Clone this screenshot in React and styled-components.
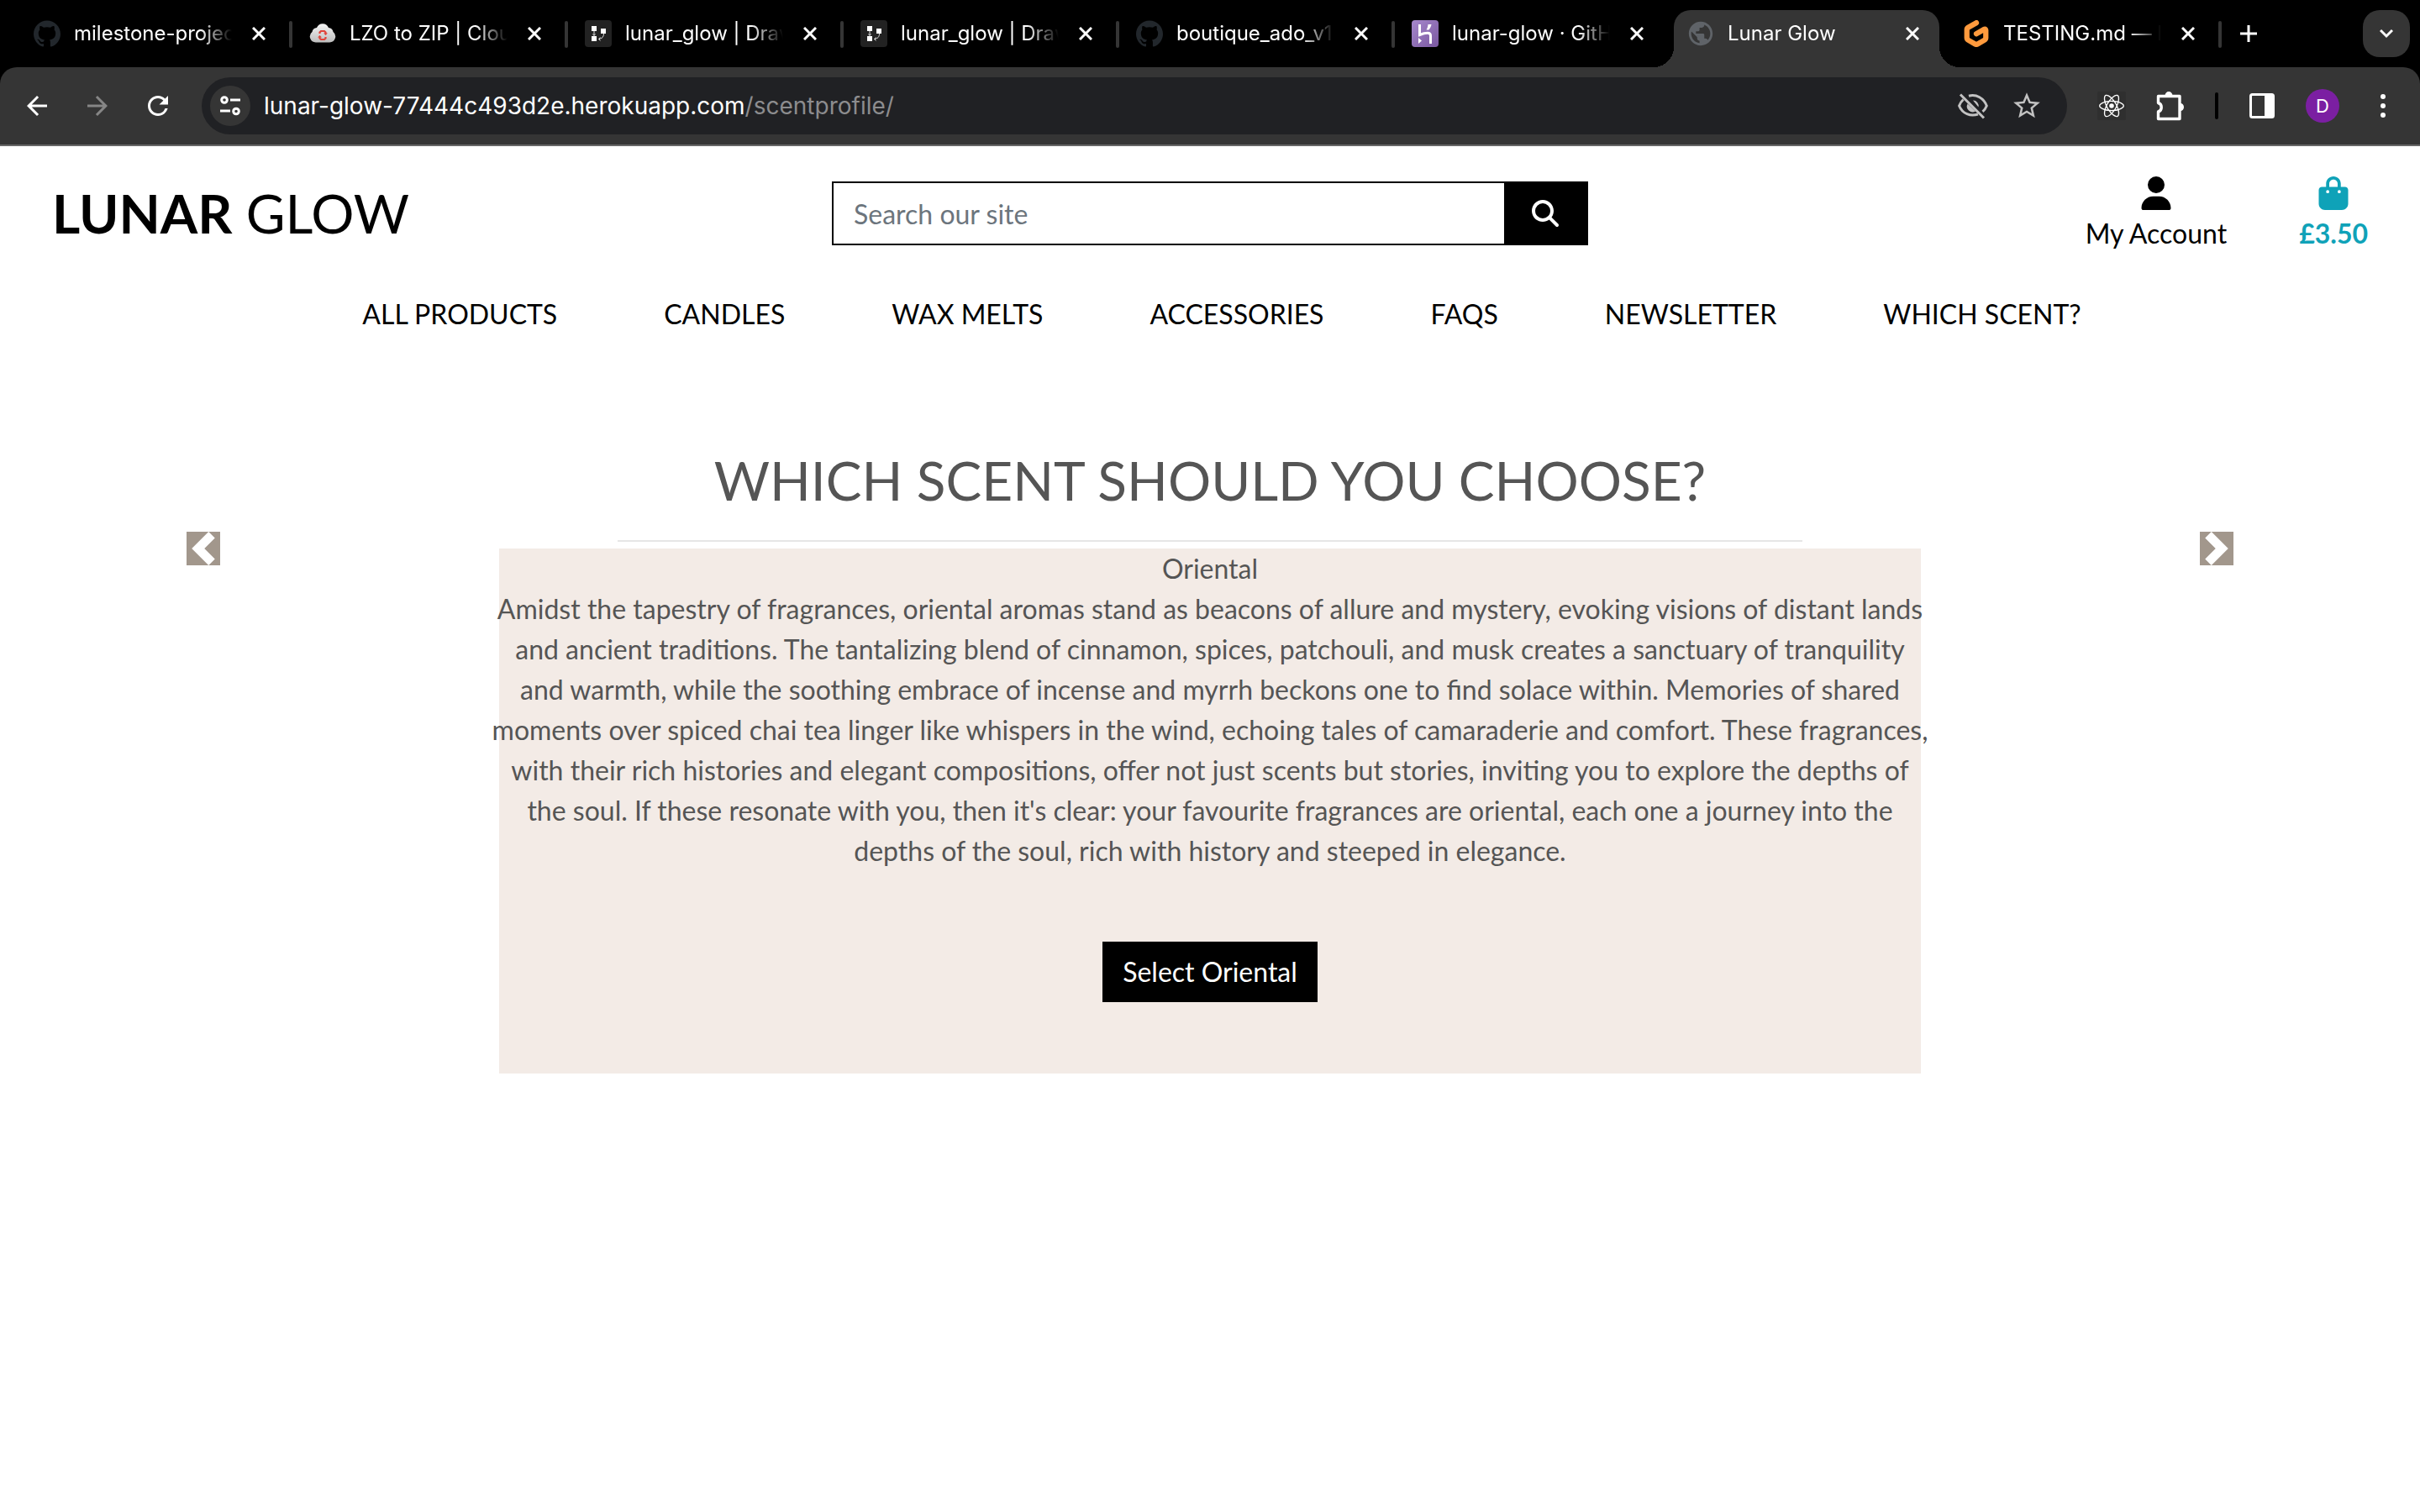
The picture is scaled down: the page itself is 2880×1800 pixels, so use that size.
import React from "react";
import styled, { createGlobalStyle, css } from "styled-components";
import { FaUser, FaBagShopping, FaMagnifyingGlass } from "react-icons/fa6";
import { SiGithub, SiGitpod, SiReact } from "react-icons/si";
import { MdPublic, MdArrowBack, MdArrowForward, MdRefresh, MdStarBorder } from "react-icons/md";

const GlobalStyle = createGlobalStyle`
  *, *::before, *::after { box-sizing: border-box; }
  body {
    margin: 0;
    background: #fff;
    color: #555;
    font-family: Lato, "Liberation Sans", sans-serif;
    font-size: 32px;
    line-height: 48px;
  }
  button, input { font: inherit; color: inherit; border: 0; border-radius: 0; padding: 0; background: none; }
  svg { display: block; flex: none; }
`;

/* ---------- browser window ---------- */

const Chrome = styled.div`
  background: #000;
  color: #fff;
  font-family: Inter, "Liberation Sans", sans-serif;
`;

const TabStrip = styled.div`
  display: flex;
  align-items: flex-end;
  height: 80px;
  padding: 0 12px 0 18px;
`;

const flare = css`
  content: "";
  position: absolute;
  bottom: 0;
  width: 24px;
  height: 24px;
`;

const Tab = styled.div`
  position: relative;
  display: flex;
  align-items: center;
  flex: 0 1 316px;
  min-width: 0;
  height: 68px;
  margin: 0 6px;
  padding: 0 24px 12px 16px;
  ${(p) =>
    p.$active
      ? css`
          background: #353535;
          border-radius: 20px 20px 0 0;
          &::before {
            ${flare}
            left: -24px;
            background: radial-gradient(circle at 0 0, transparent 24px, #353535 24px);
          }
          &::after {
            ${flare}
            right: -24px;
            background: radial-gradient(circle at 100% 0, transparent 24px, #353535 24px);
          }
        `
      : p.$divided &&
        css`
          &::after {
            content: "";
            position: absolute;
            right: -8px;
            top: 13px;
            width: 4px;
            height: 32px;
            border-radius: 2px;
            background: #353535;
          }
        `}
`;

const Favicon = styled.span`
  display: flex;
  align-items: center;
  justify-content: center;
  flex: none;
  width: 32px;
  height: 32px;
`;

const TabTitle = styled.button`
  flex: 1;
  min-width: 0;
  margin: 0 22px 0 16px;
  overflow: hidden;
  white-space: nowrap;
  text-align: left;
  font-size: 24px;
  line-height: 32px;
  mask-image: linear-gradient(to right, #000 calc(100% - 40px), transparent calc(100% - 2px));
`;

const IconButton = styled.button`
  display: flex;
  align-items: center;
  justify-content: center;
  flex: none;
  width: ${(p) => p.$size}px;
  height: ${(p) => p.$size}px;
  color: ${(p) => p.$color || "#fff"};
`;

const NewTab = styled(IconButton)`
  margin: 0 auto 24px 18px;
`;

const TabSearch = styled(IconButton)`
  margin-bottom: 12px;
  border-radius: 20px;
  background: #353535;
`;

const Toolbar = styled.div`
  display: flex;
  align-items: center;
  height: 94px;
  padding: 0 28px 0 26px;
  border-bottom: 2px solid #666;
  border-radius: 20px 20px 0 0;
  background: #353535;
`;

const NavButtons = styled.div`
  display: flex;
  gap: 36px;
  margin-right: 34px;
`;

const AddressBar = styled.div`
  display: flex;
  align-items: center;
  flex: 1;
  height: 68px;
  padding: 0 30px 0 10px;
  border-radius: 34px;
  background: #202124;
`;

const SiteInfo = styled(IconButton)`
  border-radius: 50%;
  background: #353535;
`;

const Url = styled.span`
  flex: 1;
  margin-left: 16px;
  font-size: 28px;
  line-height: 36px;
`;

const UrlPath = styled.span`
  color: #8c8c8e;
`;

const AddressActions = styled.div`
  display: flex;
  gap: 28px;
`;

const Extensions = styled.div`
  display: flex;
  align-items: center;
  gap: 36px;
  margin-left: 36px;
`;

const ExtensionIcon = styled(IconButton)`
  background: #2f2f2f;
  border-radius: 2px;
`;

const Divider = styled.span`
  width: 4px;
  height: 32px;
  border-radius: 2px;
  background: #000;
`;

const Avatar = styled.button`
  width: 40px;
  height: 40px;
  border-radius: 50%;
  background: #7b1fa2;
  font-size: 22px;
  line-height: 40px;
`;

const icon = { viewBox: "0 0 32 32", width: 32, height: 32, fill: "none", stroke: "currentColor", "aria-hidden": true };

const CloseIcon = () => (
  <svg {...icon} viewBox="0 0 16 16" width="16" height="16" strokeWidth="3">
    <path d="M1 1l14 14M15 1L1 15" />
  </svg>
);
const PlusIcon = () => (
  <svg {...icon} viewBox="0 0 20 20" width="20" height="20" strokeWidth="3">
    <path d="M10 0v20M0 10h20" />
  </svg>
);
const ChevronDown = () => (
  <svg {...icon} viewBox="0 0 16 12" width="16" height="12" strokeWidth="3">
    <path d="M1 2l7 7 7-7" />
  </svg>
);
const TuneIcon = () => (
  <svg {...icon} viewBox="0 0 24 24" width="24" height="24" strokeWidth="3">
    <circle cx="5" cy="5" r="3.3" />
    <path d="M12 5h12M0 18h12" />
    <circle cx="19" cy="18.5" r="3.3" />
  </svg>
);
const EyeOffIcon = () => (
  <svg {...icon} viewBox="0 0 36 32" width="36" height="32" strokeWidth="3">
    <path d="M13 4.2C22 1.6 31 7 34.3 16c-1 2.6-2.6 5-4.8 6.8M6.5 8.5C4.3 10.5 2.6 13 1.6 16 5.5 25.5 15 29 24 26" />
    <path d="M18 9.5a6.5 6.5 0 0 1 6.5 8zM11.6 13.5l9.4 9A6.8 6.8 0 0 1 11.6 13.5z" fill="currentColor" stroke="none" />
    <path d="M3 2.5l28 28" />
  </svg>
);
const PuzzleIcon = () => (
  <svg {...icon} viewBox="0 0 34 36" width="34" height="36" strokeWidth="3.4" strokeLinejoin="round">
    <path d="M2.5 6.5h25.5v27H2.5v-8.5c5-1.5 5-9 0-10.5z" />
    <path d="M10.5 6a4.5 5 0 0 1 9 0zM29 15a4 4.5 0 0 1 0 9z" fill="currentColor" stroke="none" />
  </svg>
);
const PanelIcon = () => (
  <svg {...icon} viewBox="0 0 30 30" width="30" height="30" strokeWidth="3">
    <rect x="1.5" y="1.5" width="27" height="27" rx="2" />
    <path d="M18 1.5h10.5v27H18z" fill="currentColor" stroke="none" />
  </svg>
);
const DotsIcon = () => (
  <svg {...icon} viewBox="0 0 8 30" width="8" height="30" fill="currentColor" stroke="none">
    <circle cx="4" cy="4" r="3" />
    <circle cx="4" cy="15" r="3" />
    <circle cx="4" cy="26" r="3" />
  </svg>
);

const CloudFavicon = () => (
  <svg {...icon} stroke="none">
    <defs>
      <linearGradient id="cloud" x1="0" y1="0" x2="0" y2="1">
        <stop offset="0" stopColor="#f4f4f4" />
        <stop offset="1" stopColor="#bdbdbd" />
      </linearGradient>
    </defs>
    <path d="M8 26.5A7 7 0 0 1 3.5 14 6 6 0 0 1 9 9a7.5 7.5 0 0 1 14 0 6 6 0 0 1 5.5 5A7 7 0 0 1 24 26.5z" fill="url(#cloud)" />
    <path d="M12.5 16v-1.5l1.500-1.500h4l1.500 1.500V16M19.500 20v1.500l-1.500 1.500h-4l-1.500-1.500V20" stroke="#e0443a" strokeWidth="2.200" />
    <path d="M17 15.500h5l-2.500 2.500zM10 20.500h5l-2.500-2.500z" fill="#e0443a" />
  </svg>
);
const DiagramFavicon = () => (
  <svg {...icon} stroke="none">
    <rect width="32" height="32" rx="4" fill="#222" />
    <g fill="#fff">
      <rect x="8" y="7" width="6" height="6" />
      <rect x="19" y="10" width="6" height="6" />
      <rect x="8" y="19" width="6" height="6" />
    </g>
    <path d="M11 13v5M9.5 16.5l1.5 2 1.5-2M22.5 16c0 4-2 6-6 6.5M18.5 20.5l-2 2 2 2" stroke="#ddd" strokeWidth="1" />
  </svg>
);
const HerokuFavicon = () => (
  <svg {...icon} stroke="none">
    <defs>
      <linearGradient id="heroku" x1="0" y1="0" x2="1" y2="1">
        <stop offset="0" stopColor="#a688cc" />
        <stop offset="1" stopColor="#7a58a0" />
      </linearGradient>
    </defs>
    <rect width="32" height="32" rx="4" fill="url(#heroku)" />
    <path d="M9.5 5v12.5c4-1.7 7-2.3 9.5-2.3 2.6 0 3.5 1.2 3.5 3.3V28" stroke="#fff" strokeWidth="3" />
    <path d="M8 21l4 3.5L8 28zM19.5 5h4c-.4 2.6-1.5 4.7-3 6.5h-3c1.2-2 1.800-4 2-6.500z" fill="#fff" />
  </svg>
);

const tabs = [
  { title: "milestone-project-4", favicon: <SiGithub size={32} color="#22272c" /> },
  { title: "LZO to ZIP | CloudConvert", favicon: <CloudFavicon /> },
  { title: "lunar_glow | DrawSQL", favicon: <DiagramFavicon /> },
  { title: "lunar_glow | DrawSQL", favicon: <DiagramFavicon /> },
  { title: "boutique_ado_v1", favicon: <SiGithub size={32} color="#22272c" /> },
  { title: "lunar-glow · GitHub", favicon: <HerokuFavicon /> },
  { title: "Lunar Glow", favicon: <MdPublic size={34} color="#5f6368" />, active: true },
  { title: "TESTING.md — lunar", favicon: <SiGitpod size={32} color="#ff9a3d" /> },
];

function BrowserBar() {
  return (
    <Chrome>
      <TabStrip>
        {tabs.map((tab, i) => (
          <Tab key={i} $active={tab.active} $divided={!tabs[i + 1]?.active}>
            <Favicon>{tab.favicon}</Favicon>
            <TabTitle>{tab.title}</TabTitle>
            <IconButton $size={16} aria-label="Close tab"><CloseIcon /></IconButton>
          </Tab>
        ))}
        <NewTab $size={32} aria-label="New tab"><PlusIcon /></NewTab>
        <TabSearch $size={56} aria-label="Search tabs"><ChevronDown /></TabSearch>
      </TabStrip>
      <Toolbar>
        <NavButtons>
          <IconButton $size={36} aria-label="Back"><MdArrowBack size={36} /></IconButton>
          <IconButton $size={36} $color="#868686" aria-label="Forward"><MdArrowForward size={36} /></IconButton>
          <IconButton $size={36} aria-label="Reload"><MdRefresh size={36} /></IconButton>
        </NavButtons>
        <AddressBar>
          <SiteInfo $size={48} aria-label="Site information"><TuneIcon /></SiteInfo>
          <Url>lunar-glow-77444c493d2e.herokuapp.com<UrlPath>/scentprofile/</UrlPath></Url>
          <AddressActions>
            <IconButton $size={36} $color="#c2c2c2" aria-label="Third-party cookies blocked"><EyeOffIcon /></IconButton>
            <IconButton $size={36} $color="#c2c2c2" aria-label="Bookmark this tab"><MdStarBorder size={38} /></IconButton>
          </AddressActions>
        </AddressBar>
        <Extensions>
          <ExtensionIcon $size={34} aria-label="React Developer Tools"><SiReact size={30} /></ExtensionIcon>
          <IconButton $size={34} aria-label="Extensions"><PuzzleIcon /></IconButton>
          <Divider />
          <IconButton $size={32} aria-label="Side panel"><PanelIcon /></IconButton>
          <Avatar aria-label="Profile">D</Avatar>
          <IconButton $size={32} aria-label="Menu"><DotsIcon /></IconButton>
        </Extensions>
      </Toolbar>
    </Chrome>
  );
}

/* ---------- shop page ---------- */

const Header = styled.header`
  display: grid;
  grid-template-columns: 1fr 900px 1fr;
  align-items: start;
  padding: 36px 62px 0;
  color: #000;
`;

const Logo = styled.a`
  margin-top: 6px;
  color: inherit;
  font-size: 64px;
  line-height: 76px;
  text-decoration: none;
`;

const SearchForm = styled.form`
  display: flex;
  height: 76px;
  margin-top: 6px;
  border: 2px solid #000;
`;

const SearchInput = styled.input`
  flex: 1;
  min-width: 0;
  padding: 2px 24px 0;
  outline: 0;
  &::placeholder { color: #6c757d; opacity: 1; }
`;

const SearchButton = styled.button`
  display: flex;
  align-items: center;
  justify-content: center;
  width: 98px;
  background: #000;
  color: #fff;
`;

const UserLinks = styled.div`
  display: flex;
  justify-content: flex-end;
  gap: 86px;
`;

const UserLink = styled.a`
  display: flex;
  flex-direction: column;
  align-items: center;
  gap: 4px;
  color: ${(p) => (p.$info ? "#0fa2b8" : "#000")};
  font-weight: ${(p) => (p.$info ? 700 : 400)};
  text-decoration: none;
`;

const MainNav = styled.nav`
  display: flex;
  justify-content: center;
  gap: 127px;
  margin-top: 48px;
  padding-left: 28px;
`;

const NavLink = styled.a`
  color: #000;
  text-decoration: none;
  text-transform: uppercase;
`;

const Carousel = styled.main`
  display: grid;
  grid-template-columns: 484px 1fr 484px;
  align-items: start;
  margin-top: 136px;
`;

const CarouselControl = styled.button`
  justify-self: center;
  width: 40px;
  height: 40px;
  margin-top: 99px;
  background: #a2978c;
  color: #fff;
`;

const Slide = styled.section`
  display: flex;
  flex-direction: column;
  align-items: center;
  padding: 0 110px;
  text-align: center;
`;

const Title = styled.h2`
  margin: 0;
  font-size: 64px;
  font-weight: 400;
  line-height: 76px;
  text-transform: uppercase;
`;

const Rule = styled.hr`
  width: 1410px;
  max-width: 100%;
  height: 2px;
  margin: 33px 0 8px;
  border: 0;
  background: #e6e6e6;
`;

const ScentCard = styled.div`
  width: 100%;
  padding-bottom: 85px;
  background: #f3ebe6;
`;

const Text = styled.p`
  margin: 0 -16px;
`;

const SelectButton = styled.button`
  height: 72px;
  margin-top: 84px;
  padding: 0 24px;
  background: #000;
  color: #fff;
`;

const links = ["All products", "Candles", "Wax melts", "Accessories", "FAQs", "Newsletter", "Which scent?"];

export default function App() {
  return (
    <>
      <GlobalStyle />
      <BrowserBar />
      <Header>
        <Logo href="#"><strong>LUNAR</strong> GLOW</Logo>
        <SearchForm>
          <SearchInput type="text" placeholder="Search our site" aria-label="Search our site" />
          <SearchButton type="button" aria-label="Search"><FaMagnifyingGlass size={32} /></SearchButton>
        </SearchForm>
        <UserLinks>
          <UserLink href="#"><FaUser size={40} />My Account</UserLink>
          <UserLink href="#" $info><FaBagShopping size={40} />£3.50</UserLink>
        </UserLinks>
      </Header>
      <MainNav>
        {links.map((label) => <NavLink key={label} href="#">{label}</NavLink>)}
      </MainNav>
      <Carousel>
        <CarouselControl aria-label="Previous">
          <svg viewBox="0 0 8 8" width="40" height="40" fill="currentColor"><path d="M5.25 0l-4 4 4 4 1.5-1.5L4.25 4l2.5-2.5L5.25 0z" /></svg>
        </CarouselControl>
        <Slide>
          <Title>Which scent should you choose?</Title>
          <Rule />
          <ScentCard>
            <Text>Oriental</Text>
            <Text>
              Amidst the tapestry of fragrances, oriental aromas stand as beacons of allure and mystery, evoking visions of distant lands<br />
              and ancient traditions. The tantalizing blend of cinnamon, spices, patchouli, and musk creates a sanctuary of tranquility<br />
              and warmth, while the soothing embrace of incense and myrrh beckons one to find solace within. Memories of shared<br />
              moments over spiced chai tea linger like whispers in the wind, echoing tales of camaraderie and comfort. These fragrances,<br />
              with their rich histories and elegant compositions, offer not just scents but stories, inviting you to explore the depths of<br />
              the soul. If these resonate with you, then it's clear: your favourite fragrances are oriental, each one a journey into the<br />
              depths of the soul, rich with history and steeped in elegance.
            </Text>
            <SelectButton>Select Oriental</SelectButton>
          </ScentCard>
        </Slide>
        <CarouselControl aria-label="Next">
          <svg viewBox="0 0 8 8" width="40" height="40" fill="currentColor"><path d="M2.75 0l-1.5 1.5L3.75 4l-2.5 2.5L2.75 8l4-4-4-4z" /></svg>
        </CarouselControl>
      </Carousel>
    </>
  );
}
